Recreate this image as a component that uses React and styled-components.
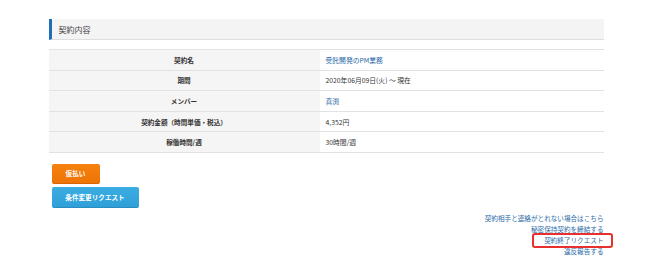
import React from "react";
import styled, { createGlobalStyle } from "styled-components";

const GlobalStyle = createGlobalStyle`
  body {
    margin: 0;
    background: #fff;
    font-family: "Noto Sans CJK JP", "Noto Sans", sans-serif;
    color: #333;
  }
`

const Page = styled.div`
  width: 555px;
  margin: 0 auto;
  padding-top: 19px;
`

const SectionTitle = styled.h2`
  margin: 0;
  height: 21px;
  display: flex;
  align-items: center;
  padding-left: 7px;
  background: #f4f4f4;
  border-left: 3px solid #1d6fb8;
  border-bottom: 1px solid #dedede;
  font-size: 8px;
  font-weight: normal;
  color: #444;
  box-sizing: border-box;
`

const Table = styled.table`
  width: 100%;
  margin-top: 9px;
  border-collapse: collapse;
  border-top: 1px solid #e2e2e2;
`

const Row = styled.tr`
  height: 20.6px;
  border-bottom: 1px solid #e2e2e2;
`

const Th = styled.th`
  width: 271px;
  background: #f5f5f5;
  font-size: 6.6px;
  font-weight: bold;
  color: #333;
  text-align: center;
  padding: 0;
`

const Td = styled.td`
  font-size: 6.8px;
  color: ${(p) => (p.link ? "#2a6aa8" : "#333")};
  padding: 0 0 0 6px;
`

const Buttons = styled.div`
  display: flex;
  flex-direction: column;
  align-items: flex-start;
  gap: 3px;
  margin: 11px 0 0 3px;
`

const Button = styled.button`
  height: ${(p) => p.h}px;
  width: ${(p) => p.w}px;
  border: none;
  border-radius: 2px;
  padding: 0;
  font-family: inherit;
  font-size: 6.6px;
  font-weight: bold;
  color: #fff;
  background: ${(p) => p.bg};
  border-bottom: 1px solid ${(p) => p.edge};
`

const Links = styled.div`
  display: flex;
  flex-direction: column;
  align-items: flex-end;
  margin-top: 5px;
`

const LinkText = styled.a`
  font-size: 6.6px;
  line-height: 11px;
  color: #2a6aa8;
  text-decoration: none;
  position: relative;

  ${(p) =>
    p.boxed &&
    `
    &::after {
      content: "";
      position: absolute;
      left: -12px;
      right: -9px;
      top: -2px;
      bottom: -2px;
      border: 2px solid #e8302f;
      border-radius: 3px;
    }
  `}
`

const rows = [
  ["契約名", "受託開発のPM業務", true],
  ["期間", "2020年06月09日(火) 〜 現在", false],
  ["メンバー", "真渕", true],
  ["契約金額（時間単価・税込）", "4,352円", false],
  ["稼働時間/週", "30時間/週", false],
]

export default function App() {
  return (
    <>
      <GlobalStyle />
      <Page>
        <SectionTitle>契約内容</SectionTitle>
        <Table>
          <tbody>
            {rows.map(([label, value, link]) => (
              <Row key={label}>
                <Th>{label}</Th>
                <Td link={link}>{value}</Td>
              </Row>
            ))}
          </tbody>
        </Table>
        <Buttons>
          <Button w={48} h={20} bg="linear-gradient(#f5820f, #ee7406)" edge="#d86505">仮払い</Button>
          <Button w={87} h={21} bg="linear-gradient(#3aaee3, #2f9fd8)" edge="#2a8cc0">条件変更リクエスト</Button>
        </Buttons>
        <Links>
          <LinkText href="#">契約相手と連絡がとれない場合はこちら</LinkText>
          <LinkText href="#">秘密保持契約を締結する</LinkText>
          <LinkText href="#" boxed>契約終了リクエスト</LinkText>
          <LinkText href="#">違反報告する</LinkText>
        </Links>
      </Page>
    </>
  );
}
